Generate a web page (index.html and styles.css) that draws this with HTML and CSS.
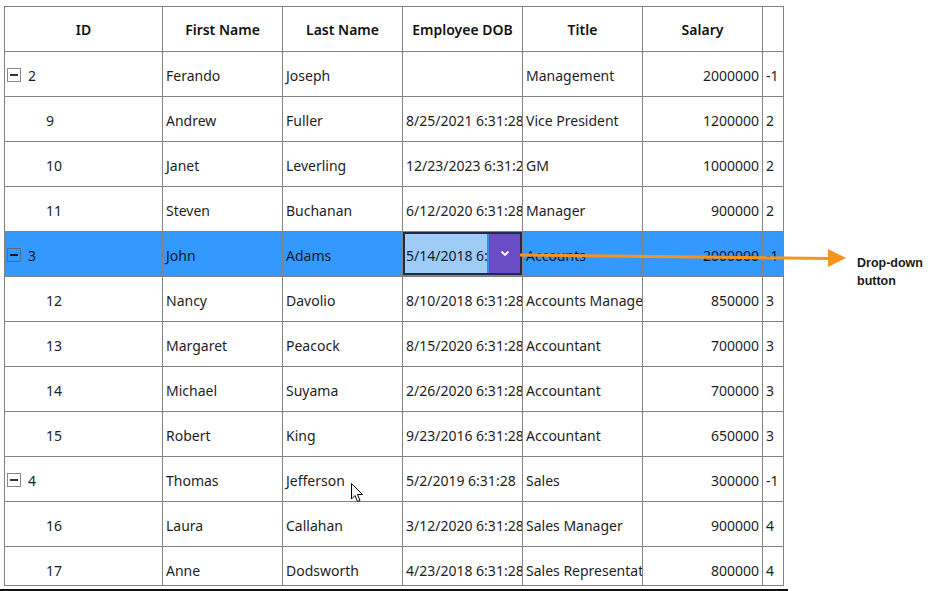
FILE: index.html
```html
<!DOCTYPE html>
<html>
<head>
<meta charset="utf-8">
<link rel="stylesheet" href="styles.css">
</head>
<body>
<div class="page">
  <div class="grid-wrap">
    <div class="grid">
      <div class="hc">ID</div><div class="hc">First Name</div><div class="hc">Last Name</div><div class="hc">Employee DOB</div><div class="hc">Title</div><div class="hc">Salary</div><div class="hc"></div>

      <div class="c id parent"><span class="exp"></span>2</div><div class="c">Ferando</div><div class="c">Joseph</div><div class="c"></div><div class="c">Management</div><div class="c num">2000000</div><div class="c">-1</div>

      <div class="c id child">9</div><div class="c">Andrew</div><div class="c">Fuller</div><div class="c">8/25/2021 6:31:28 PM</div><div class="c">Vice President</div><div class="c num">1200000</div><div class="c">2</div>

      <div class="c id child">10</div><div class="c">Janet</div><div class="c">Leverling</div><div class="c">12/23/2023 6:31:28 PM</div><div class="c">GM</div><div class="c num">1000000</div><div class="c">2</div>

      <div class="c id child">11</div><div class="c">Steven</div><div class="c">Buchanan</div><div class="c">6/12/2020 6:31:28 PM</div><div class="c">Manager</div><div class="c num">900000</div><div class="c">2</div>

      <div class="c sel id parent"><span class="exp"></span>3</div><div class="c sel">John</div><div class="c sel">Adams</div>
      <div class="c sel editcell"><div class="editor"><span class="etext">5/14/2018 6:31:28 PM</span><span class="ebtn"><svg width="10" height="7" viewBox="0 0 10 7"><path d="M1.5 1.5 L5 5 L8.5 1.5" fill="none" stroke="#fff" stroke-width="1.8"/></svg></span></div></div>
      <div class="c sel">Accounts</div><div class="c sel num">2000000</div><div class="c sel">-1</div>

      <div class="c id child">12</div><div class="c">Nancy</div><div class="c">Davolio</div><div class="c">8/10/2018 6:31:28 PM</div><div class="c">Accounts Manager</div><div class="c num">850000</div><div class="c">3</div>

      <div class="c id child">13</div><div class="c">Margaret</div><div class="c">Peacock</div><div class="c">8/15/2020 6:31:28 PM</div><div class="c">Accountant</div><div class="c num">700000</div><div class="c">3</div>

      <div class="c id child">14</div><div class="c">Michael</div><div class="c">Suyama</div><div class="c">2/26/2020 6:31:28 PM</div><div class="c">Accountant</div><div class="c num">700000</div><div class="c">3</div>

      <div class="c id child">15</div><div class="c">Robert</div><div class="c">King</div><div class="c">9/23/2016 6:31:28 PM</div><div class="c">Accountant</div><div class="c num">650000</div><div class="c">3</div>

      <div class="c id parent"><span class="exp"></span>4</div><div class="c">Thomas</div><div class="c">Jefferson</div><div class="c">5/2/2019 6:31:28</div><div class="c">Sales</div><div class="c num">300000</div><div class="c">-1</div>

      <div class="c id child">16</div><div class="c">Laura</div><div class="c">Callahan</div><div class="c">3/12/2020 6:31:28 PM</div><div class="c">Sales Manager</div><div class="c num">900000</div><div class="c">4</div>

      <div class="c id child">17</div><div class="c">Anne</div><div class="c">Dodsworth</div><div class="c">4/23/2018 6:31:28 PM</div><div class="c">Sales Representative</div><div class="c num">800000</div><div class="c">4</div>
    </div>
  </div>
  <div class="baseline"></div>

  <svg class="arrow" width="935" height="591" viewBox="0 0 935 591">
    <line x1="520" y1="255" x2="830" y2="258.5" stroke="#f7941d" stroke-width="3"/>
    <polygon points="828,249 828,267 846,258" fill="#f7941d"/>
  </svg>
  <div class="label">Drop-down<br>button</div>

  <svg class="cursor" width="13" height="20" viewBox="0 0 13 20">
    <path d="M0.5 0.5 L0.5 16 L4 12.5 L6.5 18.5 L9 17.5 L6.5 11.5 L11.5 11.5 Z" fill="#fff" stroke="#000" stroke-width="1" stroke-linejoin="round"/>
  </svg>
</div>
</body>
</html>
```
FILE: styles.css
```css
html, body {
  margin: 0;
  padding: 0;
  background: #ffffff;
}
.page {
  position: relative;
  width: 935px;
  height: 591px;
  overflow: hidden;
  font-family: "Noto Sans", "Open Sans", sans-serif;
  font-size: 14px;
  color: #1e1e1e;
}
.grid-wrap {
  margin: 6px 0 0 4px;
  width: 779px;
  height: 578px;
  border-left: 1px solid #828282;
  border-top: 1px solid #828282;
  border-bottom: 1px solid #828282;
  overflow: hidden;
}
.grid {
  display: grid;
  grid-template-columns: 158px 120px 120px 120px 120px 120px 21px;
  grid-auto-rows: 45px;
}
.hc, .c {
  border-right: 1px solid #828282;
  border-bottom: 1px solid #828282;
  white-space: nowrap;
  overflow: hidden;
  display: flex;
  align-items: center;
}
.hc {
  justify-content: center;
  font-weight: 600;
  font-size: 14px;
  color: #111;
}
.c {
  padding-left: 3px;
  padding-top: 3px;
}
.c.num {
  justify-content: flex-end;
  padding-left: 0;
  padding-right: 3px;
}
.c.child {
  padding-left: 41px;
}
.c.parent {
  padding-left: 2px;
}
.exp {
  flex: none;
  width: 12px;
  height: 12px;
  border: 1px solid #8a8a8a;
  margin-right: 7px;
  margin-top: -1px;
  position: relative;
  background: transparent;
}
.exp::after {
  content: "";
  position: absolute;
  left: 2px;
  top: 5px;
  width: 8px;
  height: 2px;
  background: #333;
}
.c.sel {
  background: #3399ff;
  color: #0d1a33;
}
.c.sel .exp {
  border-color: #5a6a86;
}
.c.sel .exp::after {
  background: #0d1a33;
}
.c.editcell {
  padding: 0;
  align-items: stretch;
}
.editor {
  flex: 1;
  display: flex;
  border: 2px solid #1d2b4c;
  margin: 0 0 1px 0;
  overflow: hidden;
}
.etext {
  flex: 1;
  min-width: 0;
  overflow: hidden;
  background: #9fcbf7;
  color: #0d1a33;
  display: flex;
  align-items: center;
  padding-left: 1px;
  padding-top: 3px;
  border-right: 2px solid #3a8ae6;
}
.ebtn {
  flex: none;
  width: 31px;
  background: #6a4cc6;
  display: flex;
  align-items: center;
  justify-content: center;
}
.baseline {
  margin-top: 3px;
  width: 788px;
  height: 2px;
  background: #111;
}
.arrow {
  position: absolute;
  left: 0;
  top: 0;
}
.label {
  position: absolute;
  left: 857px;
  top: 254px;
  font-family: "Liberation Sans", sans-serif;
  font-weight: bold;
  font-size: 12.5px;
  line-height: 18px;
  color: #1a1a1a;
}
.cursor {
  position: absolute;
  left: 351px;
  top: 483px;
}
```
